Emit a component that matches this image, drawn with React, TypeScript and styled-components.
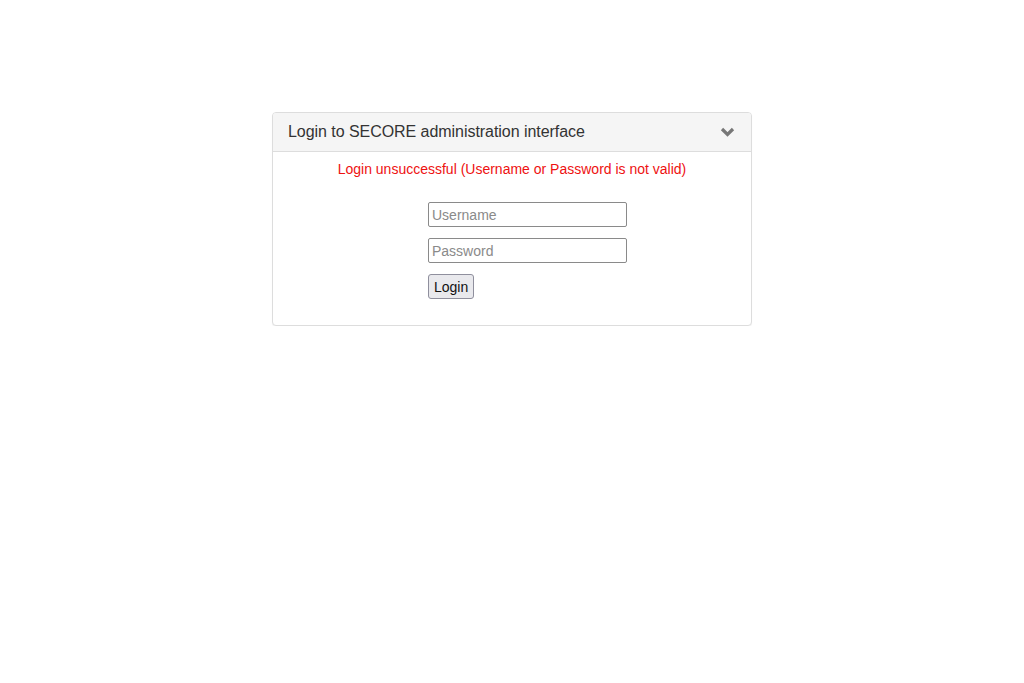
import React from "react";
import styled, { createGlobalStyle } from "styled-components";

const GlobalStyle = createGlobalStyle`
  body {
    margin: 0;
    background: #fff;
    font-family: "Liberation Sans", Arial, sans-serif;
    font-size: 14px;
    color: #333;
  }
`;

const Page = styled.div`
  padding-top: 112px;
`;

const Panel = styled.div`
  width: 480px;
  margin: 0 auto;
  box-sizing: border-box;
  border: 1px solid #ddd;
  border-radius: 4px;
  box-shadow: 0 1px 1px rgba(0, 0, 0, 0.05);
  background: #fff;
`;

const PanelHeading = styled.div`
  display: flex;
  align-items: center;
  justify-content: space-between;
  padding: 10px 15px;
  background: #f5f5f5;
  border-bottom: 1px solid #ddd;
  border-radius: 3px 3px 0 0;
`;

const PanelTitle = styled.h3`
  margin: 0;
  font-size: 16px;
  font-weight: normal;
  line-height: 18px;
  letter-spacing: -0.05px;
  color: #333;
`;

const Chevron = styled.svg`
  width: 15px;
  height: 12px;
  margin-right: 1px;
`;

const PanelBody = styled.div`
  padding: 7px 15px 26px;
`;

const ErrorText = styled.p`
  margin: 0 0 23px;
  text-align: center;
  color: #ee1111;
  font-size: 14px;
  line-height: 20px;
`;

const LoginForm = styled.form`
  display: flex;
  flex-direction: column;
  align-items: flex-start;
  gap: 11px;
  padding-left: 140px;
`;

const Field = styled.input`
  width: 199px;
  height: 25px;
  box-sizing: border-box;
  padding: 1px 3px;
  border: 1px solid #8a8a8a;
  border-radius: 2px;
  font-family: "Liberation Sans", Arial, sans-serif;
  font-size: 14px;
  color: #222;
  background: #fff;

  &::placeholder {
    color: #8a8a8a;
  }
`;

const Button = styled.button`
  height: 25px;
  padding: 1px 5px;
  box-sizing: border-box;
  border: 1px solid #8f8f9d;
  border-radius: 3px;
  background: #e9e9ed;
  font-family: "Liberation Sans", Arial, sans-serif;
  font-size: 14px;
  color: #111;
`;

export default function App() {
  return (
    <Page>
      <GlobalStyle />
      <Panel>
        <PanelHeading>
          <PanelTitle>Login to SECORE administration interface</PanelTitle>
          <Chevron viewBox="0 0 15 12">
            <polyline
              points="2,3 7.5,8.5 13,3"
              fill="none"
              stroke="#777"
              strokeWidth="3.2"
              strokeLinecap="butt"
              strokeLinejoin="miter"
            />
          </Chevron>
        </PanelHeading>
        <PanelBody>
          <ErrorText>Login unsuccessful (Username or Password is not valid)</ErrorText>
          <LoginForm onSubmit={(e) => e.preventDefault()}>
            <Field type="text" placeholder="Username" />
            <Field type="password" placeholder="Password" />
            <Button type="submit">Login</Button>
          </LoginForm>
        </PanelBody>
      </Panel>
    </Page>
  );
}
